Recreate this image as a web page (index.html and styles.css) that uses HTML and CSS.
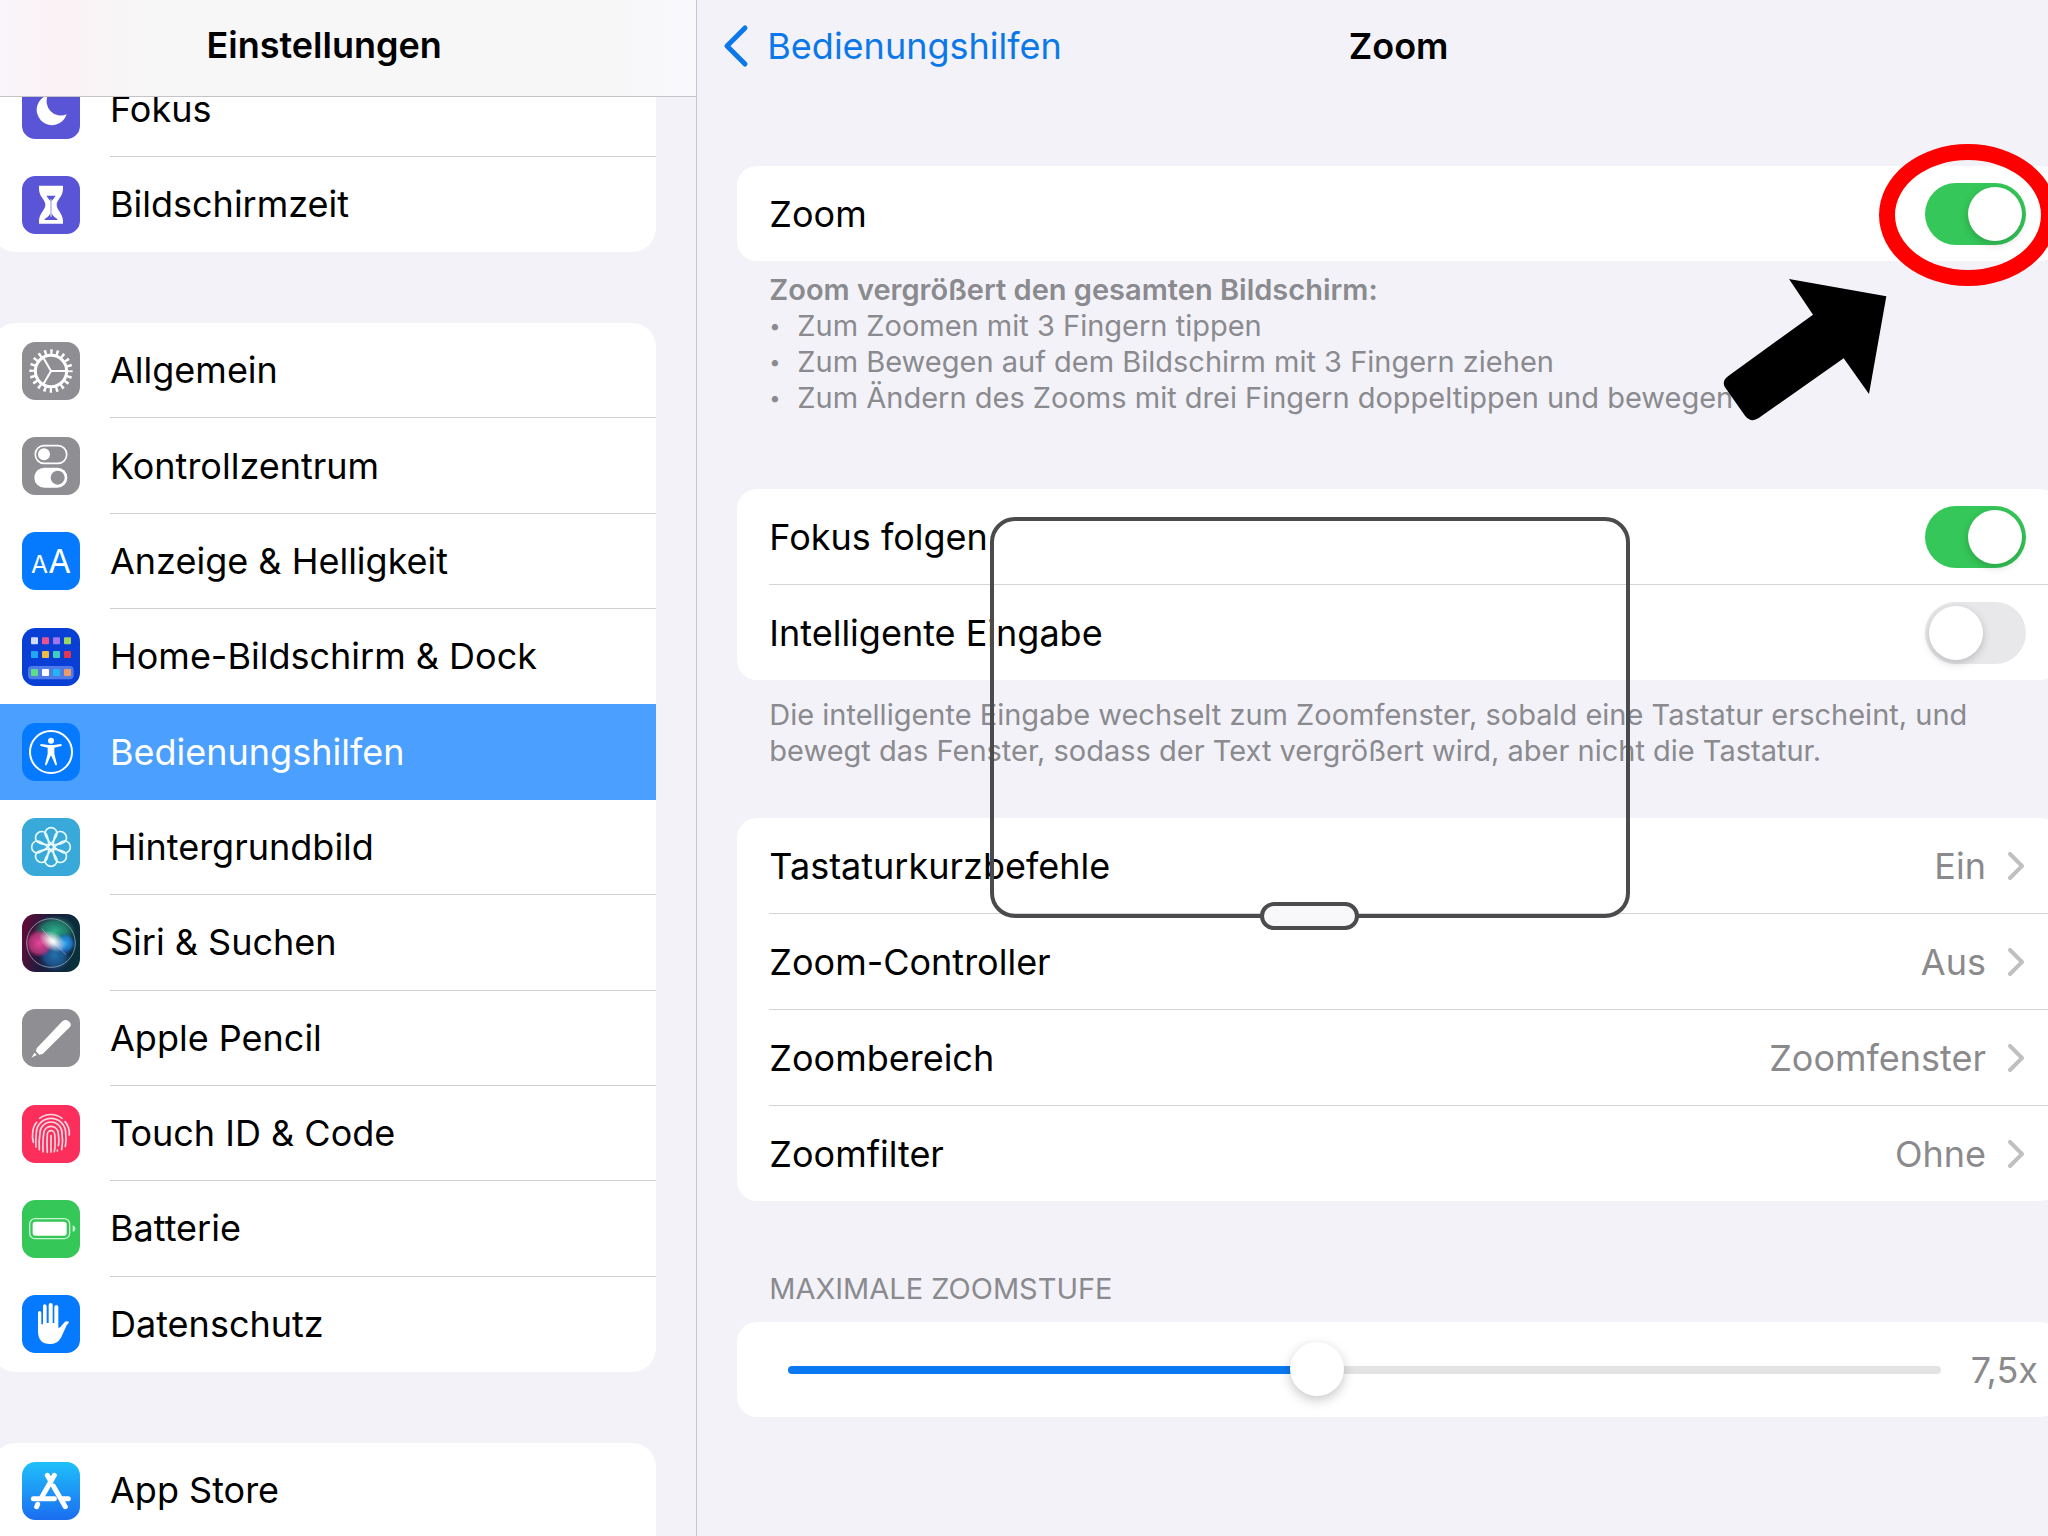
FILE: index.html
```html
<!DOCTYPE html>
<html lang="de">
<head>
<meta charset="utf-8">
<meta name="viewport" content="width=device-width, initial-scale=1">
<title>Einstellungen – Zoom</title>
<link rel="stylesheet" href="styles.css">
</head>
<body>
<div class="app">
  <nav class="sidebar" aria-label="Einstellungen">
    <header class="sidebar-head"><h1 class="title">Einstellungen</h1></header>
    <div class="groups">
      <div class="group">
        <a class="item" href="#fokus">
          <svg class="icon" viewBox="0 0 174 174"><rect width="174" height="174" rx="40" fill="#5a55d6"/><path d="M78 42A46 46 0 1 0 134 100A43 43 0 0 1 78 42Z" fill="#fff"/></svg>
          <span class="item-label">Fokus</span>
        </a>
        <a class="item" href="#bildschirmzeit">
          <svg class="icon" viewBox="0 0 174 174"><rect width="174" height="174" rx="40" fill="#5a55d6"/><path d="M51 29H123V38C123 62 104 70 104 86S123 112 123 135V143H51V135C51 112 70 102 70 86S51 62 51 38Z" fill="#fff"/><path d="M73 59H101L89 76V112Q91 120 106 129V132H68V129Q83 120 85 112V76Z" fill="#5a55d6"/><path d="M87 70V122" stroke="#fff" stroke-width="3"/></svg>
          <span class="item-label">Bildschirmzeit</span>
        </a>
      </div>

      <div class="group group-long">
        <a class="item" href="#allgemein">
          <svg class="icon" viewBox="0 0 174 174"><rect width="174" height="174" rx="40" fill="#8e8e93"/><g fill="none" stroke="#fff"><circle cx="87" cy="87" r="47" stroke-width="9"/><circle cx="87" cy="87" r="57" stroke-width="16" pathLength="40" stroke-dasharray="0.8 1.2" stroke-dashoffset="0.4"/><path d="M87 87H132M87 87L64 47M87 87L64 127" stroke-width="6"/></g></svg>
          <span class="item-label">Allgemein</span>
        </a>
        <a class="item" href="#kontrollzentrum">
          <svg class="icon" viewBox="0 0 174 174"><rect width="174" height="174" rx="40" fill="#8e8e93"/><rect x="40" y="26" width="94" height="53" rx="26" fill="none" stroke="#fff" stroke-width="5"/><circle cx="66" cy="52" r="18" fill="#fff"/><rect x="37" y="92" width="99" height="60" rx="30" fill="#fff"/><circle cx="107" cy="122" r="21" fill="#8e8e93"/></svg>
          <span class="item-label">Kontrollzentrum</span>
        </a>
        <a class="item" href="#anzeige">
          <svg class="icon" viewBox="0 0 174 174"><rect width="174" height="174" rx="40" fill="#067aff"/><g class="glyph" fill="#fff"><text x="27" y="122" font-size="74">A</text><text x="79" y="122" font-size="99">A</text></g></svg>
          <span class="item-label">Anzeige &amp; Helligkeit</span>
        </a>
        <a class="item" href="#home">
          <svg class="icon" viewBox="0 0 174 174"><rect width="174" height="174" rx="40" fill="#0a3fd6"/><rect x="18" y="114" width="137" height="40" rx="12" fill="#4f7be8"/><rect x="27" y="28" width="21" height="21" rx="3" fill="#d3dcf5"/><rect x="60" y="28" width="21" height="21" rx="3" fill="#e9538f"/><rect x="93" y="28" width="21" height="21" rx="3" fill="#a274f0"/><rect x="126" y="28" width="21" height="21" rx="3" fill="#9bd665"/><rect x="27" y="69" width="21" height="21" rx="3" fill="#23a5f2"/><rect x="60" y="69" width="21" height="21" rx="3" fill="#f2b944"/><rect x="93" y="69" width="21" height="21" rx="3" fill="#3fcfc0"/><rect x="126" y="69" width="21" height="21" rx="3" fill="#e0374e"/><rect x="27" y="123" width="21" height="21" rx="3" fill="#5fdd86"/><rect x="60" y="123" width="21" height="21" rx="3" fill="#fff"/><rect x="93" y="123" width="21" height="21" rx="3" fill="#25b4f5"/><rect x="126" y="123" width="21" height="21" rx="3" fill="#eb9a68"/></svg>
          <span class="item-label">Home-Bildschirm &amp; Dock</span>
        </a>
        <a class="item item-selected" href="#bedienungshilfen" aria-current="page">
          <svg class="icon" viewBox="0 0 174 174"><rect width="174" height="174" rx="40" fill="#067aff"/><circle cx="87" cy="87" r="63" fill="none" stroke="#fff" stroke-width="6"/><circle cx="87" cy="53" r="9" fill="#fff"/><path d="M57 63L79 66H95L117 63Q121 66 118 69L97 74V92L105 124Q104 129 100 126L88 98H86L74 126Q70 129 69 124L77 92V74L56 69Q53 66 57 63Z" fill="#fff"/></svg>
          <span class="item-label">Bedienungshilfen</span>
        </a>
        <a class="item" href="#hintergrundbild">
          <svg class="icon" viewBox="0 0 174 174"><rect width="174" height="174" rx="40" fill="#38a9d8"/><g transform="translate(87 87)" fill="none" stroke="#e8fbff" stroke-width="5"><g id="petals"><path id="petal" d="M0 -9C-8 -20 -18 -30 -18 -41A18 17 0 0 1 18 -41C18 -30 8 -20 0 -9Z"/><use href="#petal" transform="rotate(90)"/><use href="#petal" transform="rotate(180)"/><use href="#petal" transform="rotate(270)"/></g><use href="#petals" transform="rotate(45)"/><circle r="8"/></g></svg>
          <span class="item-label">Hintergrundbild</span>
        </a>
        <a class="item" href="#siri">
          <svg class="icon" viewBox="0 0 174 174">
            <defs>
              <linearGradient id="siri-bg" x1="0" y1="0.4" x2="1" y2="0.6"><stop offset="0" stop-color="#5e0c37"/><stop offset="0.4" stop-color="#1d1b3e"/><stop offset="1" stop-color="#06323a"/></linearGradient>
              <radialGradient id="siri-green"><stop offset="0" stop-color="#2fb08a"/><stop offset="0.6" stop-color="#218c72" stop-opacity="0.8"/><stop offset="1" stop-color="#1a7a62" stop-opacity="0"/></radialGradient>
              <radialGradient id="siri-pink"><stop offset="0" stop-color="#e8479a"/><stop offset="0.7" stop-color="#c2377f" stop-opacity="0.8"/><stop offset="1" stop-color="#a02468" stop-opacity="0"/></radialGradient>
              <radialGradient id="siri-blue"><stop offset="0" stop-color="#2ba8f2"/><stop offset="0.6" stop-color="#2280d8" stop-opacity="0.8"/><stop offset="1" stop-color="#1a4fb5" stop-opacity="0"/></radialGradient>
              <radialGradient id="siri-core"><stop offset="0" stop-color="#fff"/><stop offset="0.25" stop-color="#fff" stop-opacity="0.85"/><stop offset="1" stop-color="#fff" stop-opacity="0"/></radialGradient>
            </defs>
            <rect width="174" height="174" rx="40" fill="url(#siri-bg)"/>
            <ellipse cx="98" cy="52" rx="64" ry="48" fill="url(#siri-green)"/><circle cx="98" cy="124" r="50" fill="url(#siri-blue)" opacity="0.6"/><circle cx="52" cy="88" r="42" fill="url(#siri-pink)"/><circle cx="130" cy="88" r="32" fill="url(#siri-blue)"/><ellipse cx="92" cy="82" rx="44" ry="28" transform="rotate(30 92 82)" fill="url(#siri-core)"/>
            <path d="M92 82L132 122M92 82L60 44" stroke="#fff" stroke-width="3" opacity="0.35"/>
            <circle cx="87" cy="87" r="73" fill="none" stroke="#9db3bd" stroke-width="3" opacity="0.75"/>
          </svg>
          <span class="item-label">Siri &amp; Suchen</span>
        </a>
        <a class="item" href="#pencil">
          <svg class="icon" viewBox="0 0 174 174"><rect width="174" height="174" rx="40" fill="#8e8e93"/><path d="M44 118L121 37Q132 28 142 38T140 58L62 135L52 137L42 127Z" fill="#fff"/><path d="M38 131L44 138L28 146Z" fill="#fff"/></svg>
          <span class="item-label">Apple Pencil</span>
        </a>
        <a class="item" href="#touchid">
          <svg class="icon" viewBox="0 0 174 174"><rect width="174" height="174" rx="40" fill="#fc2e5b"/><g fill="none" stroke="#ffd9e2" stroke-width="5" stroke-linecap="round"><path d="M53 40A55 55 0 0 1 120 40"/><path d="M34 112Q30 98 32 84A54 54 0 0 1 44 52"/><path d="M129 50A54 54 0 0 1 142 90"/><path d="M42 126Q40 106 43 84A44 44 0 0 1 131 84Q134 104 130 124"/><path d="M52 134Q50 108 54 84A33 33 0 0 1 120 84Q124 110 119 134"/><path d="M63 140Q62 108 65 86A22 22 0 0 1 109 86Q112 112 109 122"/><path d="M76 142Q74 112 76 88A11 11 0 0 1 98 88Q101 120 97 140"/><path d="M87 92V142M106 135V138"/></g></svg>
          <span class="item-label">Touch ID &amp; Code</span>
        </a>
        <a class="item" href="#batterie">
          <svg class="icon" viewBox="0 0 174 174"><rect width="174" height="174" rx="40" fill="#36c759"/><rect x="23" y="56" width="120" height="60" rx="16" fill="none" stroke="#c9f5d2" stroke-width="4"/><rect x="32" y="65" width="102" height="42" rx="8" fill="#fff"/><path d="M152 76Q160 79 160 86T152 96Z" fill="#c9f5d2"/></svg>
          <span class="item-label">Batterie</span>
        </a>
        <a class="item" href="#datenschutz">
          <svg class="icon" viewBox="0 0 174 174"><rect width="174" height="174" rx="40" fill="#067aff"/><path d="M48 54Q48 48 53 48T58 54V88H63V34Q63 28 68 28T74 34V84H80V29Q80 24 86 24T92 29V84H97V36Q97 30 103 30T109 36V98Q112 99 116 95L128 81Q134 77 141 80Q140 85 134 91L117 128Q106 147 84 147Q48 147 48 108Z" fill="#fff"/></svg>
          <span class="item-label">Datenschutz</span>
        </a>
      </div>

      <div class="group group-open">
        <a class="item" href="#appstore">
          <svg class="icon" viewBox="0 0 174 174"><defs><linearGradient id="store" x2="0" y2="1"><stop offset="0" stop-color="#1fc0fb"/><stop offset="1" stop-color="#1b6df0"/></linearGradient></defs><rect width="174" height="174" rx="40" fill="url(#store)"/><g fill="none" stroke="#fff" stroke-width="15" stroke-linecap="round"><path d="M97 40L60 104M47 127L44 134M76 40L87 58M94 72L130 134M34 110H97M122 110H139"/></g></svg>
          <span class="item-label">App Store</span>
        </a>
      </div>
    </div>
  </nav>

  <main class="detail">
    <div class="pane">
      <header class="bar">
        <a class="back" href="#bedienungshilfen"><svg class="back-arrow" viewBox="0 0 26 44"><path d="M22 4L4 22L22 40" fill="none" stroke="currentColor" stroke-width="5" stroke-linecap="round" stroke-linejoin="round"/></svg>Bedienungshilfen</a>
        <h2 class="title">Zoom</h2>
      </header>

      <section class="section">
        <div class="card">
          <label class="row" for="zoom"><span>Zoom</span><input class="switch" id="zoom" type="checkbox" role="switch" checked></label>
        </div>
        <div class="note note-tight">
          <strong>Zoom vergrößert den gesamten Bildschirm:</strong>
          <ul class="tips">
            <li>Zum Zoomen mit 3 Fingern tippen</li>
            <li>Zum Bewegen auf dem Bildschirm mit 3 Fingern ziehen</li>
            <li>Zum Ändern des Zooms mit drei Fingern doppeltippen und bewegen</li>
          </ul>
        </div>
      </section>

      <section class="section section-focus">
        <div class="card">
          <label class="row" for="focus"><span>Fokus folgen</span><input class="switch" id="focus" type="checkbox" role="switch" checked></label>
          <label class="row" for="typing"><span>Intelligente Eingabe</span><input class="switch" id="typing" type="checkbox" role="switch"></label>
        </div>
        <p class="note">Die intelligente Eingabe wechselt zum Zoomfenster, sobald eine Tastatur erscheint, und<br>bewegt das Fenster, sodass der Text vergrößert wird, aber nicht die Tastatur.</p>
      </section>

      <section class="section section-links">
        <div class="card">
          <a class="row" href="#kurzbefehle"><span>Tastaturkurzbefehle</span><span class="value">Ein</span><svg class="chevron" viewBox="0 0 16 28"><path d="M2 2L14 14L2 26"/></svg></a>
          <a class="row" href="#controller"><span>Zoom-Controller</span><span class="value">Aus</span><svg class="chevron" viewBox="0 0 16 28"><path d="M2 2L14 14L2 26"/></svg></a>
          <a class="row" href="#bereich"><span>Zoombereich</span><span class="value">Zoomfenster</span><svg class="chevron" viewBox="0 0 16 28"><path d="M2 2L14 14L2 26"/></svg></a>
          <a class="row" href="#filter"><span>Zoomfilter</span><span class="value">Ohne</span><svg class="chevron" viewBox="0 0 16 28"><path d="M2 2L14 14L2 26"/></svg></a>
        </div>
      </section>

      <section class="section section-level">
        <label class="caption" for="level">MAXIMALE ZOOMSTUFE</label>
        <div class="card level">
          <input class="slider" id="level" type="range" min="1.2" max="15" step="0.1" value="7.5">
          <output class="value level-value" for="level">7,5x</output>
        </div>
      </section>
    </div>

    <div class="lens"><button class="lens-handle" type="button" aria-label="Zoomfenster bewegen"></button></div>
    <div class="ring"></div>
    <svg class="pointer" viewBox="0 0 492 426"><path d="M198 0L490 52L438 345L362 238L106 418Q84 432 66 410L8 328Q-8 306 20 288L270 107Z" fill="#000"/></svg>
  </main>
</div>
</body>
</html>
```
FILE: styles.css
```css
* {
  box-sizing: border-box;
}

body {
  margin: 0;
  background: #f2f2f8;
  color: #000;
  font-family: Inter, "Liberation Sans", sans-serif;
  font-size: 36px;
  line-height: 44px;
}

a {
  color: inherit;
  text-decoration: none;
}

.app {
  display: flex;
  height: 100vh;
  overflow: hidden;
}

.title {
  margin: 0;
  font-size: 36px;
  font-weight: 600;
}

/* Sidebar */
.sidebar {
  box-sizing: content-box;
  flex: 0 0 34%;
  border-right: 1px solid #c6c6cb;
}

.sidebar-head {
  position: relative;
  z-index: 1;
  display: flex;
  align-items: center;
  justify-content: center;
  height: 97px;
  padding: 0 48px 6px 0;
  border-bottom: 1px solid #c4c4c8;
  background: linear-gradient(90deg, #f9f5fb, #fbf2f5 8%, #f7f7f8 22%, #f7f7f8 88%, #f9f9fd);
}

.groups {
  display: flex;
  flex-direction: column;
  gap: 71px;
  margin: -35px 40px 0 -8px;
}

.group {
  display: grid;
  grid-auto-rows: 1fr;
  overflow: hidden;
  border-radius: 24px;
  background: #fff;
}

.group-long {
  min-height: 1049px;
}

.group-open {
  border-bottom-right-radius: 0;
  border-bottom-left-radius: 0;
}

.item {
  display: flex;
  align-items: center;
  gap: 30px;
  min-height: 95px;
  padding-left: 30px;
}

.icon {
  flex: none;
  width: 58px;
  height: 58px;
}

.glyph {
  font-family: Inter, sans-serif;
}

.item-label {
  display: flex;
  flex: 1;
  align-items: center;
  align-self: stretch;
  border-bottom: 1px solid #cfcfd2;
}

.item:last-child .item-label,
.item:has(+ .item-selected) .item-label,
.item-selected .item-label {
  border-bottom-color: transparent;
}

.item-selected {
  background: #4ba0ff;
  color: #fff;
}

/* Detail pane: the cards run on past the right edge of the window */
.detail {
  position: relative;
  flex: 1;
  min-width: 0;
  overflow: hidden;
}

.pane {
  margin-right: -52px;
  padding: 0 40px;
}

.bar {
  display: grid;
  grid-template-columns: 1fr auto 1fr;
  align-items: center;
  height: 97px;
  padding-bottom: 6px;
}

.back {
  display: flex;
  align-items: center;
  gap: 18px;
  margin-left: -14px;
  color: #0a78e8;
}

.back-arrow {
  width: 26px;
  height: 44px;
}

.section {
  padding-top: 69px;
}

.section-focus {
  padding-top: 73px;
}

.section-links {
  padding-top: 49px;
}

.section-level {
  padding-top: 70px;
}

.card {
  overflow: hidden;
  border-radius: 20px;
  background: #fff;
}

.row {
  display: flex;
  align-items: center;
  min-height: 95px;
  margin-left: 32px;
  padding-right: 34px;
}

.row + .row {
  min-height: 96px;
  border-top: 1px solid #d4d4d7;
}

.row > :first-child {
  flex: 1;
}

.value {
  color: #8a8a8d;
}

.chevron {
  width: 16px;
  height: 28px;
  margin: 0 2px 0 22px;
  fill: none;
  stroke: #c0c0c3;
  stroke-width: 4px;
  stroke-linecap: round;
  stroke-linejoin: round;
}

.switch {
  appearance: none;
  display: flex;
  width: 101px;
  height: 62px;
  margin: 0;
  padding: 4px;
  border-radius: 31px;
  background: #e8e8eb;
}

.switch::before {
  content: "";
  width: 54px;
  height: 54px;
  border-radius: 50%;
  background: #fff;
  box-shadow: 0 3px 8px rgba(0, 0, 0, 0.2);
}

.switch:checked {
  justify-content: flex-end;
  background: #35c759;
}

.note {
  margin: 0;
  padding: 17px 32px 0;
  color: #8a8a8f;
  font-size: 29px;
  line-height: 36px;
}

.note-tight {
  padding-top: 11px;
}

.note strong {
  font-weight: 600;
}

.tips {
  margin: 0;
  padding: 0;
  list-style: none;
}

.tips li {
  display: flex;
}

.tips li::before {
  content: "•";
  width: 28px;
  font-size: 20px;
}

.caption {
  display: block;
  padding: 0 32px 15px;
  color: #8a8a8f;
  font-size: 29px;
  line-height: 36px;
}

.level {
  display: flex;
  align-items: center;
  gap: 24px;
  height: 95px;
  padding: 0 22px 0 51px;
}

.level-value {
  min-width: 73px;
  text-align: right;
}

.slider {
  appearance: none;
  flex: 1;
  min-width: 0;
  height: 56px;
  margin: 0;
  background: transparent;
}

.slider::-webkit-slider-runnable-track {
  height: 8px;
  border-radius: 4px;
  background: linear-gradient(90deg, #0a78f0 45%, #e3e3e4 45%);
}

.slider::-webkit-slider-thumb {
  appearance: none;
  width: 54px;
  height: 54px;
  margin-top: -24px;
  border-radius: 50%;
  background: #fff;
  box-shadow: 0 4px 12px rgba(0, 0, 0, 0.22);
}

/* Zoom window floating over the pane */
.lens {
  position: absolute;
  top: 517px;
  left: 293px;
  width: 640px;
  height: 401px;
  border: 4px solid #4b4b4d;
  border-radius: 25px;
  pointer-events: none;
}

.lens-handle {
  position: absolute;
  bottom: -16px;
  left: 50%;
  width: 99px;
  height: 28px;
  margin-left: -50px;
  padding: 0;
  border: 4px solid #4b4b4d;
  border-radius: 14px;
  background: #f8f8fa;
  pointer-events: auto;
}

/* Annotations */
.ring {
  position: absolute;
  top: 144px;
  right: -9px;
  width: 178px;
  height: 142px;
  border: 16px solid #f00;
  border-radius: 50%;
  pointer-events: none;
}

.pointer {
  position: absolute;
  top: 279px;
  right: 161px;
  width: 164px;
  height: 142px;
}
```
